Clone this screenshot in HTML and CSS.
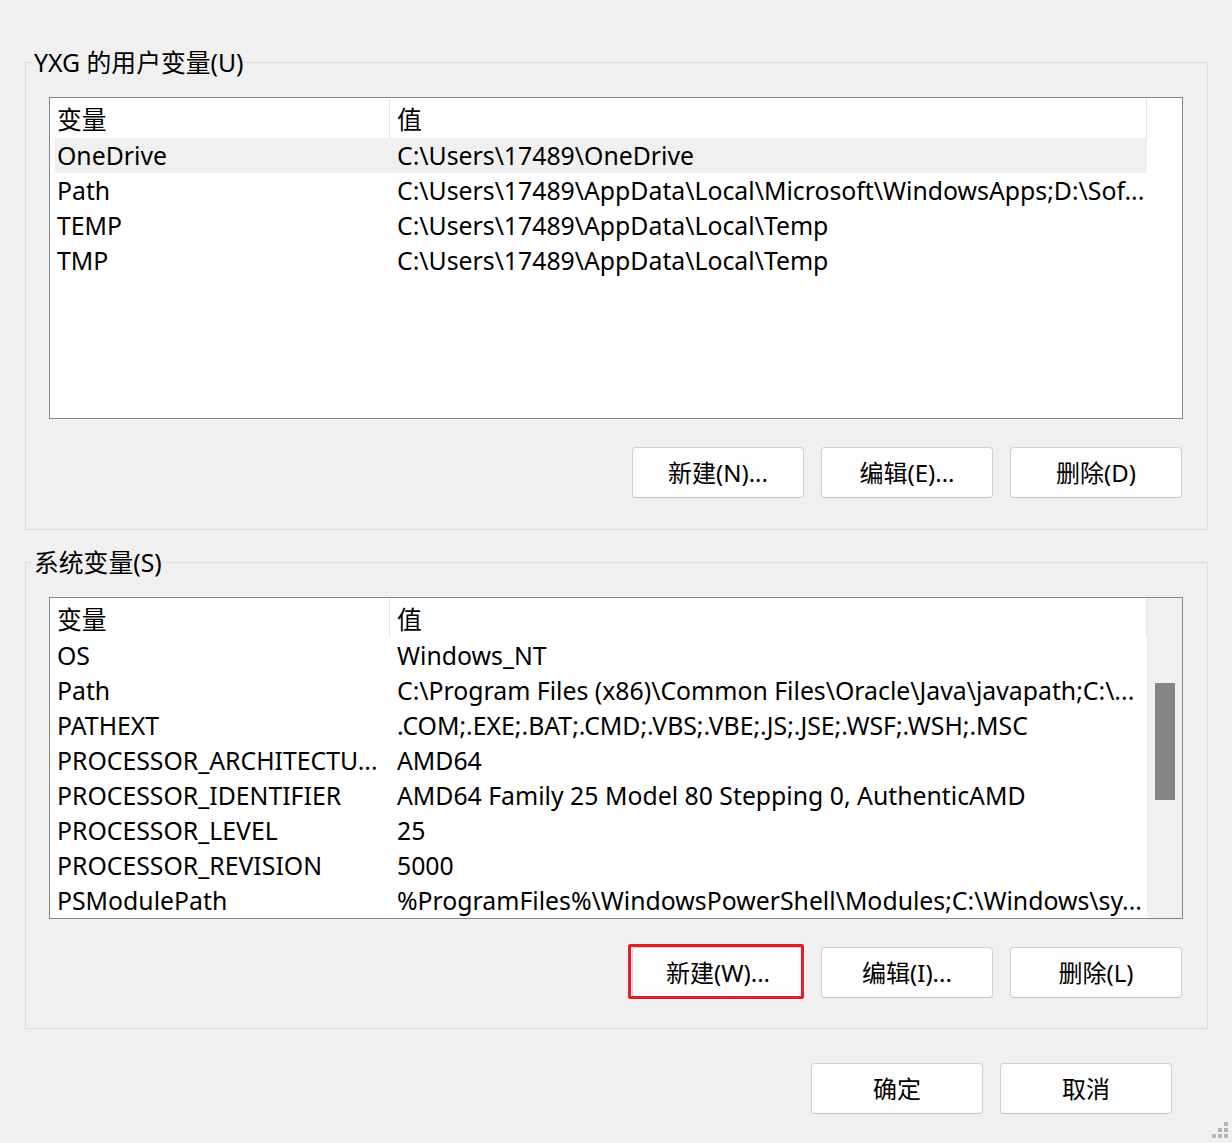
FILE: index.html
```html
<!DOCTYPE html>
<html lang="zh-CN">
<head>
<meta charset="utf-8">
<title>环境变量</title>
<link rel="stylesheet" href="styles.css">
</head>
<body>
<div class="dialog">
  <fieldset class="group group-user">
    <legend>YXG 的用户变量(U)</legend>
    <div class="list">
      <div class="list-body">
        <div class="head">
          <div class="hc hc1">变量</div>
          <div class="hc hc2">值</div>
        </div>
        <div class="row sel"><div class="c1">OneDrive</div><div class="c2">C:\Users\17489\OneDrive</div></div>
        <div class="row"><div class="c1">Path</div><div class="c2">C:\Users\17489\AppData\Local\Microsoft\WindowsApps;D:\Sof...</div></div>
        <div class="row"><div class="c1">TEMP</div><div class="c2">C:\Users\17489\AppData\Local\Temp</div></div>
        <div class="row"><div class="c1">TMP</div><div class="c2">C:\Users\17489\AppData\Local\Temp</div></div>
      </div>
      <div class="list-side"></div>
    </div>
    <div class="btns">
      <button class="btn">新建(N)...</button>
      <button class="btn">编辑(E)...</button>
      <button class="btn">删除(D)</button>
    </div>
  </fieldset>

  <fieldset class="group group-sys">
    <legend>系统变量(S)</legend>
    <div class="list">
      <div class="list-body">
        <div class="head">
          <div class="hc hc1">变量</div>
          <div class="hc hc2">值</div>
        </div>
        <div class="row"><div class="c1">OS</div><div class="c2">Windows_NT</div></div>
        <div class="row"><div class="c1">Path</div><div class="c2">C:\Program Files (x86)\Common Files\Oracle\Java\javapath;C:\...</div></div>
        <div class="row"><div class="c1">PATHEXT</div><div class="c2">.COM;.EXE;.BAT;.CMD;.VBS;.VBE;.JS;.JSE;.WSF;.WSH;.MSC</div></div>
        <div class="row"><div class="c1">PROCESSOR_ARCHITECTU...</div><div class="c2">AMD64</div></div>
        <div class="row"><div class="c1">PROCESSOR_IDENTIFIER</div><div class="c2">AMD64 Family 25 Model 80 Stepping 0, AuthenticAMD</div></div>
        <div class="row"><div class="c1">PROCESSOR_LEVEL</div><div class="c2">25</div></div>
        <div class="row"><div class="c1">PROCESSOR_REVISION</div><div class="c2">5000</div></div>
        <div class="row"><div class="c1">PSModulePath</div><div class="c2">%ProgramFiles%\WindowsPowerShell\Modules;C:\Windows\sy...</div></div>
      </div>
      <div class="list-side scroll">
        <div class="thumb"></div>
      </div>
    </div>
    <div class="btns">
      <button class="btn marked">新建(W)...<span class="mark"></span></button>
      <button class="btn">编辑(I)...</button>
      <button class="btn">删除(L)</button>
    </div>
  </fieldset>

  <div class="footer">
    <button class="btn">确定</button>
    <button class="btn">取消</button>
  </div>

  <div class="grip">
    <i class="d d1"></i>
    <i class="d d2"></i><i class="d d3"></i>
    <i class="d d4"></i><i class="d d5"></i><i class="d d6"></i>
  </div>
</div>
</body>
</html>
```

FILE: styles.css
```css
html, body {
  margin: 0;
  padding: 0;
  background: #f0f0f0;
}

.dialog {
  position: relative;
  width: 1232px;
  height: 1143px;
  box-sizing: border-box;
  padding-top: 48px;
  background: #f0f0f0;
  overflow: hidden;
  font-family: "Noto Sans", "Noto Sans CJK SC", sans-serif;
  font-size: 24.8px;
  color: #000;
}

.group {
  margin: 0 0 0 25px;
  width: 1183px;
  box-sizing: border-box;
  border: 1px solid #dcdcdc;
  padding: 21px 24px 31px 23px;
  min-width: 0;
}

.group-sys {
  margin-top: 18px;
  padding-bottom: 30px;
}

.group legend {
  margin-left: -17px;
  padding: 0 2px;
  line-height: 28px;
  height: 28px;
  font-size: 24.8px;
}

.list {
  display: flex;
  width: 1134px;
  height: 322px;
  box-sizing: border-box;
  border: 1px solid #828790;
  background: #fff;
}

.list-body {
  width: 1097px;
  display: flex;
  flex-direction: column;
  overflow: hidden;
}

.list-side {
  flex: 1;
  background: #fff;
}

.list-side.scroll {
  background: #f0f0f0;
  padding: 85px 7px 0 8px;
}

.thumb {
  height: 117px;
  background: #858585;
}

.head {
  display: flex;
  height: 40px;
  flex-shrink: 0;
}

.hc {
  box-sizing: border-box;
  white-space: nowrap;
  border-right: 1px solid #e5e5e5;
  padding-left: 7px;
  padding-top: 2px;
  line-height: 38px;
}

.hc1 {
  width: 340px;
}

.hc2 {
  width: 757px;
}

.row {
  display: flex;
  height: 35px;
  line-height: 35px;
  margin-left: 5px;
  margin-right: -1px;
  white-space: nowrap;
  flex-shrink: 0;
}

.row.sel {
  background: #f0f0f0;
}

.c1 {
  width: 335px;
  padding-left: 2px;
  box-sizing: border-box;
  overflow: hidden;
}

.c2 {
  padding-left: 7px;
  overflow: hidden;
}

.btns {
  display: flex;
  justify-content: flex-end;
  gap: 17px;
  margin-top: 28px;
  width: 1133px;
}

.btn {
  position: relative;
  width: 172px;
  height: 51px;
  box-sizing: border-box;
  border: 1px solid #d0d0d0;
  border-bottom-color: #c4c4c4;
  border-radius: 4px;
  background: #fdfdfd;
  font-family: "Noto Sans", "Noto Sans CJK SC", sans-serif;
  font-size: 24px;
  color: #000;
  padding: 0;
  margin: 0;
  line-height: 49px;
  text-align: center;
}

.mark {
  position: absolute;
  left: -5px;
  top: -4px;
  right: -1px;
  bottom: -2px;
  border: 3px solid #e81c28;
  border-radius: 2px;
  pointer-events: none;
}

.footer {
  display: flex;
  justify-content: flex-end;
  gap: 17px;
  margin-top: 34px;
  padding-right: 60px;
}

.grip {
  position: absolute;
  right: 0;
  bottom: 0;
  width: 20px;
  height: 21px;
}

.d {
  position: absolute;
  width: 4px;
  height: 4px;
  background: #b4b4b4;
}

.d1 { left: 12px; top: 0; }
.d2 { left: 6px; top: 6px; }
.d3 { left: 12px; top: 6px; }
.d4 { left: 0; top: 12px; }
.d5 { left: 6px; top: 12px; }
.d6 { left: 12px; top: 12px; }
```
